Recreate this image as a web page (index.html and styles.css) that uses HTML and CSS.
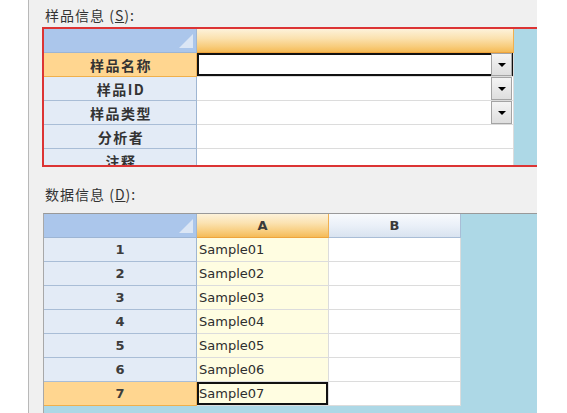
FILE: index.html
```html
<!DOCTYPE html>
<html>
<head>
<meta charset="utf-8">
<link rel="stylesheet" href="styles.css">
</head>
<body>
<div class="page">
  <div class="gutter"></div>
  <div class="panel">
    <div class="label">样品信息 (<u>S</u>):</div>
    <div class="box redbox">
      <div class="row">
        <div class="rh corner"><span class="tri"></span></div>
        <div class="cell wide hsel"></div>
      </div>
      <div class="row">
        <div class="rh cjk rsel">样品名称</div>
        <div class="cell wide active"><span class="dd"></span></div>
      </div>
      <div class="row">
        <div class="rh cjk">样品ID</div>
        <div class="cell wide"><span class="dd"></span></div>
      </div>
      <div class="row">
        <div class="rh cjk">样品类型</div>
        <div class="cell wide"><span class="dd"></span></div>
      </div>
      <div class="row">
        <div class="rh cjk">分析者</div>
        <div class="cell wide"></div>
      </div>
      <div class="row">
        <div class="rh cjk">注释</div>
        <div class="cell wide"></div>
      </div>
    </div>
    <div class="label label2">数据信息 (<u>D</u>):</div>
    <div class="box greybox">
      <div class="row">
        <div class="rh corner"><span class="tri"></span></div>
        <div class="cell col hsel colhead">A</div>
        <div class="cell col hblue colhead">B</div>
      </div>
      <div class="row"><div class="rh num">1</div><div class="cell col ycell">Sample01</div><div class="cell col"></div></div>
      <div class="row"><div class="rh num">2</div><div class="cell col ycell">Sample02</div><div class="cell col"></div></div>
      <div class="row"><div class="rh num">3</div><div class="cell col ycell">Sample03</div><div class="cell col"></div></div>
      <div class="row"><div class="rh num">4</div><div class="cell col ycell">Sample04</div><div class="cell col"></div></div>
      <div class="row"><div class="rh num">5</div><div class="cell col ycell">Sample05</div><div class="cell col"></div></div>
      <div class="row"><div class="rh num">6</div><div class="cell col ycell">Sample06</div><div class="cell col"></div></div>
      <div class="row"><div class="rh num rsel">7</div><div class="cell col ycell active">Sample07</div><div class="cell col"></div></div>
    </div>
  </div>
  <div class="right"></div>
</div>
</body>
</html>
```
FILE: styles.css
```css
html, body {
  margin: 0;
  padding: 0;
  background: #ffffff;
}
.page {
  width: 567px;
  height: 413px;
  overflow: hidden;
  display: flex;
  font-family: "DejaVu Sans", "Noto Sans CJK SC", sans-serif;
  color: #2a2a2a;
}
.gutter {
  width: 28px;
  flex: none;
  background: #ffffff;
}
.panel {
  width: 508px;
  flex: none;
  height: 413px;
  border-left: 1px solid #b8b8b8;
  background: #f0f0f0;
  padding-left: 13px;
  box-sizing: border-box;
  width: 509px;
  overflow: hidden;
}
.right {
  flex: 1;
  background: #ffffff;
}
.label {
  margin-top: 8px;
  height: 14px;
  line-height: 14px;
  font-family: "Noto Sans CJK SC", sans-serif;
  font-size: 14px;
  letter-spacing: 1px;
  color: #333;
  margin-bottom: 5px;
  margin-left: 3px;
  white-space: nowrap;
}
.label u {
  text-decoration: underline;
}
.label2 {
  margin-top: 20px;
  margin-bottom: 12px;
}
.box {
  width: 520px;
  background: #add8e6;
  overflow: hidden;
}
.redbox {
  border: 2px solid #dc3434;
  height: 136px;
}
.greybox {
  margin-left: 1px;
  border-top: 1px solid #999999;
  border-left: 1px solid #a8a8a8;
  height: 200px;
}
.row {
  display: flex;
  height: 24px;
}
.rh {
  width: 153px;
  flex: none;
  box-sizing: border-box;
  background: #e3ebf6;
  border-right: 1px solid #9fb6d2;
  border-bottom: 1px solid #a9bdd6;
  display: flex;
  align-items: center;
  justify-content: center;
  position: relative;
  color: #333;
}
.rh.cjk {
  font-family: "Noto Sans CJK SC", sans-serif;
  font-weight: bold;
  font-size: 14px;
  letter-spacing: 1.5px;
  padding-left: 2px;
}
.rh.num {
  font-size: 13px;
  font-weight: bold;
  color: #3c3c3c;
}
.rh.corner {
  background: #abc6eb;
  border-bottom: 1px solid #9db5d4;
}
.tri {
  position: absolute;
  right: 3px;
  bottom: 4px;
  width: 0;
  height: 0;
  border-left: 14px solid transparent;
  border-bottom: 14px solid #dbe6f5;
}
.rh.rsel {
  background: #ffd690;
  border-bottom-color: #f0b04c;
  border-right-color: #eeb25a;
}
.cell {
  box-sizing: border-box;
  flex: none;
  background: #ffffff;
  border-bottom: 1px solid #dcdcdc;
  border-right: 1px solid #dcdcdc;
  position: relative;
  display: flex;
  align-items: center;
  font-size: 13px;
  color: #2e2e2e;
}
.wide {
  width: 317px;
}
.col {
  width: 132px;
}
.hsel {
  background: linear-gradient(to bottom, #fdf2da 0%, #fbe2b0 40%, #f8cd7e 75%, #f5bb57 100%);
  border-bottom: 1px solid #eea43c;
  border-right: 1px solid #f0b050;
}
.hblue {
  background: linear-gradient(to bottom, #f8fafd 0%, #eaf0f8 50%, #d9e3f0 100%);
  border-bottom: 1px solid #a9bdd6;
  border-right: 1px solid #a9bdd6;
}
.colhead {
  justify-content: center;
  font-weight: bold;
  font-size: 13px;
  color: #3a3a3a;
}
.ycell {
  background: #fffde1;
  padding-left: 2px;
}
.active {
  box-shadow: inset 0 0 0 2px #111111;
}
.dd {
  position: absolute;
  right: 1px;
  top: 0;
  width: 21px;
  height: 23px;
  box-sizing: border-box;
  border: 1px solid #a4a4a4;
  background: linear-gradient(to bottom, #f4f4f4, #dedede);
}
.dd::after {
  content: "";
  position: absolute;
  left: 6px;
  top: 9px;
  width: 0;
  height: 0;
  border-left: 4px solid transparent;
  border-right: 4px solid transparent;
  border-top: 4px solid #000;
}
```
